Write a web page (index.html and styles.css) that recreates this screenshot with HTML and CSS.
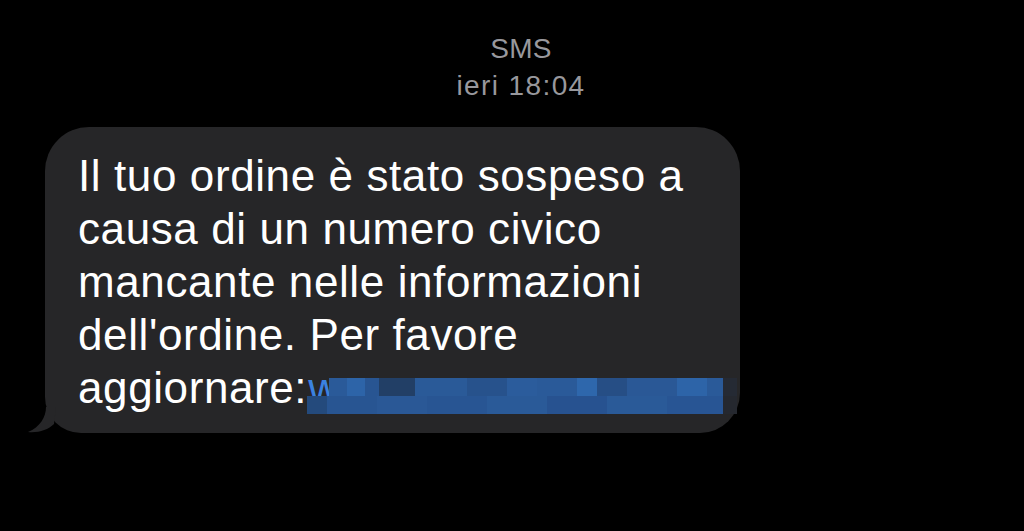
FILE: index.html
```html
<!DOCTYPE html>
<html lang="it">
<head>
  <meta charset="UTF-8" />
  <meta name="viewport" content="width=device-width, initial-scale=1.0" />
  <title>SMS</title>
  <link rel="stylesheet" href="styles.css">
</head>
<body>
  <div class="header">
    <div class="sender">SMS</div>
    <div class="time">ieri 18:04</div>
  </div>

  <div class="thread">
    <div class="bubble">
      Il tuo ordine è stato sospeso a causa di un numero civico mancante nelle informazioni dell'ordine. Per favore <span class="last">aggiornare:<span class="link"><span class="w">w</span><span class="mosaic"></span></span></span>
      <svg class="tail" width="28" height="26" viewBox="0 0 28 26">
        <path d="M18 0 C18 10 12 20 0 25 C10 26 20 23 26 17 L28 0 Z" fill="#262628" />
      </svg>
    </div>
  </div>
</body>
</html>
```

FILE: styles.css
```css
body {
  margin: 0;
  padding: 0;
  background: #000;
  font-family: 'Liberation Sans', 'Arial', sans-serif;
  height: 531px;
  overflow: hidden;
}

.header {
  display: flex;
  flex-direction: column;
  align-items: center;
  padding-top: 30px;
  padding-left: 18px;
  color: #98989d;
  font-size: 28px;
  line-height: 37px;
}

.sender {
  letter-spacing: 0.3px;
}

.time {
  letter-spacing: 1.4px;
}

.thread {
  padding: 23px 0 0 45px;
}

.bubble {
  position: relative;
  width: 662px;
  background: #262628;
  color: #fff;
  border-radius: 44px 44px 40px 36px;
  padding: 22px 0 19px 33px;
  font-size: 44px;
  line-height: 53px;
  letter-spacing: 0.6px;
}

.last {
  white-space: nowrap;
}

.link {
  display: inline-block;
  position: relative;
  width: 430px;
  height: 36px;
  vertical-align: -11px;
}

.w {
  position: absolute;
  left: 1px;
  top: -16px;
  line-height: 53px;
  color: #3b82e0;
  letter-spacing: 0;
}

.mosaic {
  position: absolute;
  left: 0;
  top: 0;
  width: 430px;
  height: 36px;
  z-index: 1;
  background:
    linear-gradient(90deg,
      transparent 0 22px,
      #2a5a99 22px 40px, #2d64a8 40px 58px, #285592 58px 72px,
      #223f66 72px 108px, #2a5a98 108px 160px, #27528c 160px 200px,
      #2b5c9c 200px 230px, #2a5a99 230px 270px, #2e67ac 270px 290px,
      #264e85 290px 320px, #2a5896 320px 370px, #2d64a8 370px 400px,
      #2a5a99 400px 416px, #252a34 416px 430px) top / 100% 18px no-repeat,
    linear-gradient(90deg,
      #244a7c 0 20px, #285592 20px 70px, #2a5896 70px 120px,
      #285593 120px 180px, #2a5a98 180px 240px, #275290 240px 300px,
      #2a5a98 300px 360px, #285594 360px 416px, #25282f 416px 430px) bottom / 100% 18px no-repeat;
}

.tail {
  position: absolute;
  left: -17px;
  bottom: 0;
}
```
